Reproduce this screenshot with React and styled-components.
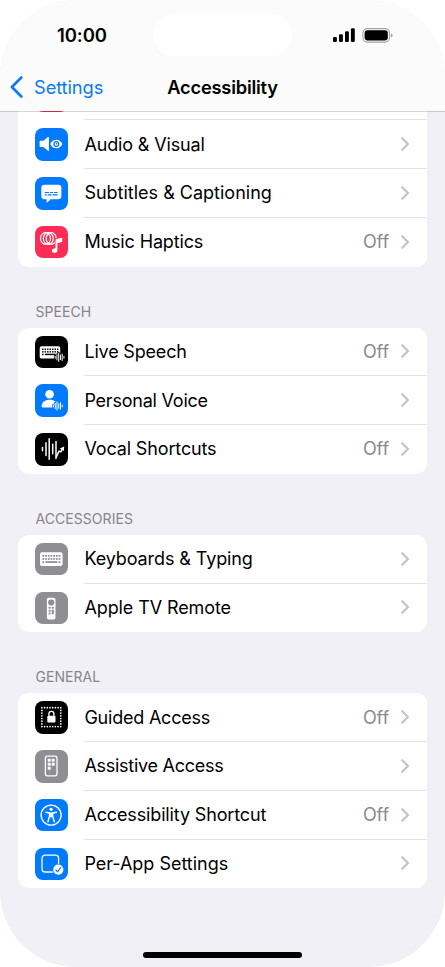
import styled, { createGlobalStyle } from "styled-components";

const range = (n) => Array.from({ length: n }, (_, i) => i);

const Keys = ({ x, y, dx, dy, cols, size, color }) => (
  <g fill={color}>
    {range(2).map((r) =>
      range(cols).map((c) => (
        <rect key={`${r}-${c}`} x={x + c * dx} y={y + r * dy} width={size} height={size} />
      ))
    )}
    <rect x={x} y={y + 2 * dy} width={size} height={size} />
    <rect x={x + dx * 1.1} y={y + 2 * dy} width={(cols - 3.2) * dx + size} height={size} />
    <rect x={x + (cols - 1) * dx} y={y + 2 * dy} width={size} height={size} />
  </g>
);

const Wave = ({ x, y, halo }) => {
  const bars = [0.9, 2.6, 4.1, 2.3, 3.3, 0.9];
  const d = bars.map((h, i) => `M${x + i * 1.75} ${y - h}V${y + h}`).join("");
  return (
    <>
      <path d={d} stroke={halo} strokeWidth="2.6" strokeLinecap="round" />
      <path d={d} stroke="#fff" strokeWidth="1" strokeLinecap="round" />
    </>
  );
};

const glyphs = {
  audio: (
    <>
      <path d="M5.4 12.8h3l4.6-3.7q.9-.6.9.5v12.6q0 1.1-.9.5l-4.600-3.700h-3q-.8 0-.8-.8v-4.600q0-.8.8-.8z" fill="#fff" />
      <path d="M15.2 16c1.200-2.600 3.400-4.300 6.100-4.300s4.900 1.700 6.100 4.300c-1.200 2.600-3.400 4.300-6.100 4.300s-4.900-1.700-6.100-4.300z" fill="#fff" />
      <circle cx="21.3" cy="16" r="2.3" fill="#fff" stroke="#007aff" strokeWidth="1.3" />
      <circle cx="21.6" cy="15.8" r="0.8" fill="#007aff" />
    </>
  ),
  subtitles: (
    <>
      <path d="M9.5 7.8h13.700q3.200 0 3.200 3.200v8q0 3.200-3.200 3.200h-7.400l-3.400 3.100q-.8.6-.8-.4v-2.700H9.500q-3.200 0-3.200-3.200v-8q0-3.200 3.200-3.200z" fill="#fff" />
      <path d="M9.700 15.500h4.400M15.100 15.500h3M19 15.500h3.500M9.700 17.900h2M12.700 17.900h3.900M17.600 17.900h5" stroke="#007aff" strokeWidth="1.1" />
    </>
  ),
  music: (
    <>
      <g stroke="#fff" strokeWidth="1.2">
        <ellipse cx="10.5" cy="12.5" rx="5" ry="5.800" />
        <ellipse cx="13.3" cy="12.5" rx="5" ry="5.800" />
        <ellipse cx="16.200" cy="12.5" rx="5" ry="5.800" />
      </g>
      <path d="M21.400 24.500V13.500l5.600-1.500v3.400l-4.700 1.300" stroke="#ff2d55" strokeWidth="3.200" />
      <ellipse cx="19.300" cy="24" rx="3.900" ry="3.500" fill="#ff2d55" />
      <path d="M20.500 13.900q0-.7.7-.9l5.200-1.300q.8-.2.8.6v3q0 .6-.6.8l-4.200 1.100v7q0 2.500-3 2.700-2.600 0-2.600-2.100 0-1.800 2.300-2.300l1.400-.4z" fill="#fff" />
    </>
  ),
  live: (
    <>
      <rect x="4.700" y="10.200" width="20.500" height="12.400" rx="1.900" fill="#fff" />
      <Keys x={7.1} y={12.5} dx={2.48} dy={2.6} cols={7} size={1.45} color="#000" />
      <Wave x={20.2} y={21.3} halo="#000" />
    </>
  ),
  voice: (
    <>
      <circle cx="14.600" cy="10.200" r="4.300" fill="#fff" />
      <path d="M6.600 22.200c0-4 3.500-6.400 8-6.400s8 2.400 8 6.400q0 1.400-1.400 1.400H8q-1.400 0-1.400-1.400z" fill="#fff" />
      <Wave x={18.5} y={22} halo="#007aff" />
    </>
  ),
  vocal: (
    <>
      <path d="M7.500 14.500v3.300M11 9.800v12.700M14.200 5.700v20.600M17.700 11.300v9.400M21 8.400v17" stroke="#fff" strokeWidth="1.5" strokeLinecap="round" />
      <path d="M21.300 24.300l2.600-6 1.900.5 2-3.500" stroke="#fff" strokeWidth="1.5" strokeLinejoin="round" />
      <path d="M29.200 13.500l-.3 4.600-4.200-2.500z" fill="#fff" />
    </>
  ),
  keyboard: (
    <>
      <rect x="5" y="9.300" width="22.600" height="13.700" rx="2" fill="#fff" />
      <Keys x={7.4} y={12} dx={2.7} dy={3.1} cols={7} size={1.75} color="#8e8e93" />
    </>
  ),
  remote: (
    <>
      <rect x="11.900" y="5.700" width="8.600" height="21.800" rx="1.900" fill="#fff" />
      <g fill="#8e8e93">
        <circle cx="16.200" cy="10.500" r="3.100" />
        <rect x="13.500" y="14.800" width="2.200" height="2" rx=".7" />
        <rect x="16.700" y="14.800" width="2.200" height="2" rx=".7" />
        <rect x="13.500" y="17.700" width="2.200" height="2" rx=".7" />
        <rect x="16.700" y="17.700" width="2.200" height="4.500" rx=".7" />
        <rect x="13.500" y="20.400" width="2.200" height="2" rx=".7" />
      </g>
    </>
  ),
  guided: (
    <>
      <path d="M6.900 6.700h18.900v18.900H6.900z" stroke="#fff" strokeWidth="1.7" strokeDasharray="0 2.7" strokeLinecap="round" />
      <rect x="12.300" y="14.700" width="8.200" height="6.900" rx="1" fill="#fff" />
      <path d="M13.900 15v-2.100c0-3.300 5-3.300 5 0V15" stroke="#fff" strokeWidth="1.3" />
    </>
  ),
  assistive: (
    <>
      <rect x="10.400" y="6.200" width="11.600" height="19.600" rx="2" stroke="#fff" strokeWidth="1.3" />
      <g fill="#fff">
        <rect x="12.700" y="8.700" width="3" height="3" rx=".4" />
        <rect x="16.700" y="8.700" width="3" height="3" rx=".4" />
        <rect x="12.700" y="12.700" width="3" height="3" rx=".4" />
        <rect x="16.700" y="12.700" width="3" height="3" rx=".4" />
        <rect x="12.700" y="16.700" width="3" height="3" rx=".4" />
      </g>
    </>
  ),
  shortcut: (
    <>
      <circle cx="16.100" cy="16.100" r="10" stroke="#fff" strokeWidth="1.4" />
      <circle cx="16.100" cy="10.300" r="1.600" fill="#fff" />
      <path d="M10.800 13.300l3.700.7v3.300l-1.600 5.400M21.400 13.300l-3.700.7v3.300l1.600 5.400" stroke="#fff" strokeWidth="1.4" strokeLinecap="round" strokeLinejoin="round" />
      <path d="M14.200 13.400h3.800v4.400l-1.900.8-1.900-.8z" fill="#fff" />
    </>
  ),
  perapp: (
    <>
      <rect x="7" y="7.200" width="16.600" height="16.800" rx="3.300" stroke="#fff" strokeWidth="1.3" />
      <circle cx="23.300" cy="21.700" r="6" fill="#007aff" />
      <circle cx="23.300" cy="21.700" r="5.100" fill="#fff" />
      <path d="M20.900 21.900l1.700 1.900 3.200-4.300" stroke="#007aff" strokeWidth="1.2" strokeLinecap="round" strokeLinejoin="round" />
    </>
  ),
};

const sections = [
  {
    rows: [
      // mostly scrolled under the header, only the edge of its tile shows
      { label: "", icon: "hidden", color: "#ff2d55" },
      { label: "Audio & Visual", icon: "audio", color: "#007aff", tracking: -0.14 },
      { label: "Subtitles & Captioning", icon: "subtitles", color: "#007aff" },
      { label: "Music Haptics", icon: "music", color: "#ff2d55", value: "Off", tracking: -0.14 },
    ],
  },
  {
    title: "SPEECH",
    rows: [
      { label: "Live Speech", icon: "live", color: "#000", value: "Off", tracking: -0.18 },
      { label: "Personal Voice", icon: "voice", color: "#007aff", tracking: -0.22 },
      { label: "Vocal Shortcuts", icon: "vocal", color: "#000", value: "Off", tracking: -0.14 },
    ],
  },
  {
    title: "ACCESSORIES",
    rows: [
      { label: "Keyboards & Typing", icon: "keyboard", color: "#8e8e93", tracking: -0.1 },
      { label: "Apple TV Remote", icon: "remote", color: "#8e8e93", tracking: -0.1 },
    ],
  },
  {
    title: "GENERAL",
    rows: [
      { label: "Guided Access", icon: "guided", color: "#000", value: "Off", tracking: -0.22 },
      { label: "Assistive Access", icon: "assistive", color: "#8e8e93", tracking: -0.27 },
      { label: "Accessibility Shortcut", icon: "shortcut", color: "#007aff", value: "Off", tracking: -0.14 },
      { label: "Per-App Settings", icon: "perapp", color: "#007aff", tracking: -0.02 },
    ],
  },
];

const SettingRow = ({ label, icon, color, value, tracking = 0 }) => (
  <Row>
    <Tile $color={color}>
      <svg viewBox="0 0 32.3 32.3" fill="none">{glyphs[icon]}</svg>
    </Tile>
    <RowBody>
      <Label $tracking={tracking}>{label}</Label>
      {value && <Value>{value}</Value>}
      <Chevron viewBox="0 0 8 14">
        <path d="M1.200 1.200L6.900 7l-5.700 5.800" />
      </Chevron>
    </RowBody>
  </Row>
);

const App = () => {
  return (
    <Phone>
      <GlobalStyle />
      <Header>
        <StatusBar>
          <Time>10:00</Time>
          <Island />
          <Status>
            <svg width="22" height="15" viewBox="0 0 22 15">
              <rect x="0" y="9" width="3.900" height="5" rx="1.200" />
              <rect x="6" y="6.200" width="3.900" height="7.800" rx="1.200" />
              <rect x="12" y="3.200" width="3.900" height="10.800" rx="1.200" />
              <rect x="17.900" y="0.300" width="3.900" height="13.700" rx="1.200" />
            </svg>
            <svg width="32" height="15" viewBox="0 0 32 15">
              <rect x="0.900" y="0.600" width="26.600" height="13.500" rx="4.300" fill="none" stroke="#a5a5a5" strokeWidth="1.1" />
              <rect x="2.600" y="2.300" width="23.200" height="10.100" rx="2.800" />
              <path d="M28.900 5.200q1.700.7 1.700 2.200t-1.700 2.200z" fill="#a5a5a5" />
            </svg>
          </Status>
        </StatusBar>
        <NavBar>
          <Back>
            <svg width="13" height="22" viewBox="0 0 13 22">
              <path d="M11.300 1.500L1.900 11l9.400 9.500" />
            </svg>
            Settings
          </Back>
          <Title>Accessibility</Title>
        </NavBar>
      </Header>
      <Content>
        <List>
          {sections.map((section, i) => (
            <section key={i}>
              {section.title && <SectionTitle>{section.title}</SectionTitle>}
              <Card>
                {section.rows.map((row) => (
                  <SettingRow key={row.icon} {...row} />
                ))}
              </Card>
            </section>
          ))}
        </List>
      </Content>
      <HomeBar />
    </Phone>
  );
};

const GlobalStyle = createGlobalStyle`
  * {
    box-sizing: border-box;
  }

  body {
    margin: 0;
    background: #fff;
    font-family: Inter, "Liberation Sans", sans-serif;
  }
`;

const Phone = styled.div`
  display: flex;
  flex-direction: column;
  width: 445px;
  height: 967px;
  overflow: hidden;
  border-radius: 76px;
  background: #f1f0f6;
  color: #000;
`;

const Header = styled.header`
  position: relative;
  z-index: 1;
  flex: none;
  height: 112px;
  margin-bottom: -1px;
  padding-top: 14px;
  border-bottom: 1px solid rgba(0, 0, 0, 0.16);
  background: #fbfbfb;
  background-clip: padding-box;
`;

const StatusBar = styled.div`
  display: grid;
  grid-template-columns: 153px 139px 1fr;
  align-items: center;
  height: 42px;
`;

const Time = styled.span`
  padding-left: 57px;
  font-size: 18.5px;
  font-weight: 600;
  letter-spacing: -0.1px;
`;

const Island = styled.div`
  height: 42px;
  border-radius: 21px;
  background: #fff;
`;

const Status = styled.div`
  display: flex;
  gap: 7px;
  padding-left: 41px;
`;

const NavBar = styled.div`
  display: grid;
  grid-template-columns: 1fr auto 1fr;
  align-items: center;
  height: 40px;
  margin-top: 11px;
`;

const Back = styled.div`
  display: flex;
  align-items: center;
  gap: 11px;
  padding-left: 10px;
  color: #0a7bf5;
  font-size: 18.3px;
  letter-spacing: -0.1px;

  path {
    fill: none;
    stroke: #0a7bf5;
    stroke-width: 2.6;
    stroke-linecap: round;
    stroke-linejoin: round;
  }
`;

const Title = styled.h1`
  margin: 0;
  font-size: 18.3px;
  font-weight: 600;
  letter-spacing: -0.22px;
`;

const Content = styled.main`
  flex: 1;
  min-height: 0;
  overflow: hidden;
  padding: 0 18px;
`;

const List = styled.div`
  margin-top: -39.5px;
`;

const SectionTitle = styled.h2`
  display: flex;
  align-items: flex-end;
  height: 61px;
  margin: 0;
  padding: 0 17.5px 8px;
  color: #85858b;
  font-size: 14px;
  font-weight: 400;
  line-height: 17px;
  letter-spacing: 0.05px;
`;

const Card = styled.div`
  overflow: hidden;
  border-radius: 11px;
  background: #fff;
`;

const RowBody = styled.div`
  display: flex;
  flex: 1;
  align-items: center;
  height: 100%;
  padding-right: 18px;
  border-bottom: 1px solid #e4e4e7;
`;

const Row = styled.div`
  display: flex;
  align-items: center;
  gap: 16.8px;
  height: 48.75px;
  padding-left: 17.3px;

  &:last-child ${RowBody} {
    border-bottom-color: transparent;
  }
`;

const Tile = styled.div`
  flex: none;
  width: 32.3px;
  height: 32.3px;
  border-radius: 8px;
  background: ${({ $color }) => $color};

  svg {
    display: block;
  }
`;

const Label = styled.span`
  flex: 1;
  font-size: 18px;
  letter-spacing: ${({ $tracking }) => $tracking}px;
`;

const Value = styled.span`
  margin-right: 12px;
  color: #8a8a8e;
  font-size: 18px;
  letter-spacing: -0.1px;
`;

const Chevron = styled.svg`
  width: 8px;
  height: 14px;
  fill: none;
  stroke: #c4c4c7;
  stroke-width: 2.2;
  stroke-linecap: round;
  stroke-linejoin: round;
`;

const HomeBar = styled.div`
  flex: none;
  align-self: center;
  width: 159px;
  height: 6px;
  margin-bottom: 9px;
  border-radius: 3px;
  background: #000;
`;

export default App;
